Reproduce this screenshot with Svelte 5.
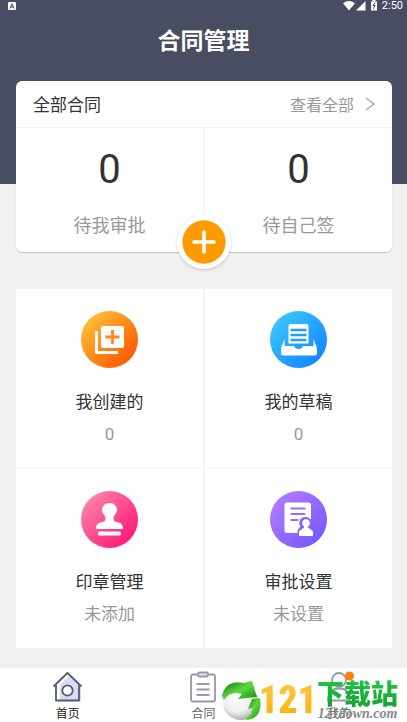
<script lang="ts">
  const stats = [
    { label: '待我审批', count: 0 },
    { label: '待自己签', count: 0 },
  ];

  const tiles = [
    { icon: 'created', title: '我创建的', note: '0', from: '#ffc038', to: '#ff5500' },
    { icon: 'draft', title: '我的草稿', note: '0', from: '#3cc8ff', to: '#0f84ff' },
    { icon: 'stamp', title: '印章管理', note: '未添加', from: '#ff85a8', to: '#ff1478' },
    { icon: 'approve', title: '审批设置', note: '未设置', from: '#b27cff', to: '#7358ff' },
  ];

  const tabs = [
    { icon: 'home', label: '首页' },
    { icon: 'contract', label: '合同' },
    { icon: 'mine', label: '我的' },
  ];

  let active = $state('home');
</script>

<div class="page">
  <header>
    <div class="status">
      <svg viewBox="0 0 8 8" width="8" height="8" aria-hidden="true">
        <rect width="8" height="8" rx="1" fill="#fff" />
        <path d="M2 6.5 4 1.8 6 6.5M2.8 5h2.4" fill="none" stroke="#484d61" />
      </svg>
      <span class="signals">
        <svg viewBox="0 0 36 12" width="36" height="12" aria-hidden="true">
          <path d="M0 3.2Q6-1.4 12 3.2L6 10.5Z" fill="#fff" />
          <path d="M22.500 1v9.500H13Z" fill="#fff" />
          <path d="M28 1.500h1.500V0h3v1.500H34v9h-6Z" fill="#fff" />
          <path d="M32 2.800 30 5.500h2L30.200 8.800" fill="none" stroke="#484d61" />
        </svg>
        2:50
      </span>
    </div>
    <h1>合同管理</h1>
  </header>

  <main>
    <section class="card">
      <div class="card-head">
        <h2>全部合同</h2>
        <a href="#all">
          查看全部
          <svg viewBox="0 0 12 16" width="12" height="16" aria-hidden="true">
            <path d="M2 2l8 6-8 6" fill="none" stroke="#aaa" stroke-width="1.500" />
          </svg>
        </a>
      </div>
      <div class="stats">
        {#each stats as stat}
          <a class="stat" href="#stat">
            <strong>{stat.count}</strong>
            <span>{stat.label}</span>
          </a>
        {/each}
      </div>
      <button class="add" type="button" aria-label="新建合同">
        <svg viewBox="0 0 44 44" width="44" height="44" aria-hidden="true">
          <circle cx="22" cy="22" r="21.700" fill="#ff9a00" />
          <path d="M22 12v20M12 22h20" stroke="#fff" stroke-width="3.600" stroke-linecap="round" />
        </svg>
      </button>
    </section>

    <section class="grid">
      {#each tiles as tile}
        <a class="tile" href="#{tile.icon}">
          <svg viewBox="0 0 57 57" width="57" height="57" aria-hidden="true">
            <defs>
              <linearGradient id="fill-{tile.icon}" x1="0.1" y1="0.1" x2="0.9" y2="0.9">
                <stop offset="0" stop-color={tile.from} />
                <stop offset="1" stop-color={tile.to} />
              </linearGradient>
            </defs>
            <circle cx="28.500" cy="28.500" r="28.500" fill="url(#fill-{tile.icon})" />
            {#if tile.icon === 'created'}
              <rect x="20" y="15" width="23" height="22" rx="2.500" fill="#fff" />
              <path d="M31.500 19v14M24.500 26h14" stroke="#ff8620" stroke-width="2.800" />
              <path d="M15.500 20v21.500H37" fill="none" stroke="#fff" stroke-width="2.800" stroke-linejoin="round" />
            {:else if tile.icon === 'draft'}
              <path d="M14.500 28 11 37v5.500q0 2 2 2h32q2 0 2-2V37l-3.500-9v7H33q-1 3-4.500 3T24 35h-9.500Z" fill="#fff" />
              <path d="M20.500 13h16q2 0 2 2v17.500h-20V15q0-2 2-2Z" fill="#fff" />
              <path d="M21.500 19h14M21.500 24h14M21.500 29h14" stroke="#259dff" stroke-width="2.400" stroke-linecap="round" />
            {:else if tile.icon === 'stamp'}
              <path d="M28.500 12c-4.500 0-7.500 3.300-7.500 7 0 3.800 3.500 5 3.500 8.500 0 3.200-2.500 3.500-5 4-3 .700-4.500 2.500-4.500 6.500h27c0-4-1.500-5.800-4.500-6.500-2.500-.500-5-.800-5-4 0-3.500 3.500-4.700 3.500-8.500 0-3.700-3-7-7.500-7Z" fill="#fff" />
              <rect x="17" y="40.500" width="23" height="4" rx="1.500" fill="#fff" />
            {:else}
              <path d="M17 11.500h21.500q2.500 0 2.500 2.500v14H30v14H17q-2.500 0-2.500-2.500V14q0-2.500 2.500-2.500Z" fill="#fff" />
              <path d="M21.500 17.500h13M21.500 23h13M21.500 29h6" stroke="#946dff" stroke-width="2.200" stroke-linecap="round" />
              <path d="M35.500 27.500a4.500 4.500 0 0 0-3 8L29 39.700V44.500h13.500v-4.800L38.500 35.500a4.500 4.500 0 0 0-3-8Z" fill="#8565ff" stroke="#8565ff" stroke-width="3" />
              <circle cx="36" cy="32" r="3.800" fill="#fff" />
              <path d="M34.500 34h3v2.500l5 4v4h-13v-4l5-4Z" fill="#fff" stroke="#fff" stroke-linejoin="round" />
            {/if}
          </svg>
          <strong>{tile.title}</strong>
          <span>{tile.note}</span>
        </a>
      {/each}
    </section>
  </main>

  <nav>
    {#each tabs as tab}
      <button type="button" class:on={active === tab.icon} onclick={() => (active = tab.icon)}>
        <svg viewBox="0 0 32 32" width="32" height="32" fill="none" stroke="#9599a8" stroke-width="1.800" aria-hidden="true">
          {#if tab.icon === 'home'}
            <path d="M8 14 18 4l11 11v15H8Z" fill="#d8dcf8" stroke="none" />
            <path d="M1.500 15.500 15.500 2l14 13.500M4 14v15.500h23V14" stroke="#555a6e" stroke-linejoin="round" />
            <circle cx="15.500" cy="19.500" r="5.200" fill="#fff" stroke="#555a6e" />
          {:else if tab.icon === 'contract'}
            <rect x="4" y="3.500" width="24" height="27" rx="2" />
            <rect x="11" y="1.500" width="10" height="4" rx="1.500" fill="#e2e4ec" />
            <path d="M9.500 13h13M9.500 18.500h13M9.500 24h13" />
          {:else}
            <circle cx="16" cy="9" r="7" />
            <path d="M5 29.500c0-8 4-12 11-12s11 4 11 12Z" />
            <circle cx="26.500" cy="5" r="4.500" fill="#ff7f00" stroke="none" />
          {/if}
        </svg>
        {tab.label}
      </button>
    {/each}

    <div class="watermark">
      <svg viewBox="0 0 42 42" width="42" height="42" aria-hidden="true">
        <defs>
          <radialGradient id="ball" cx="0.4" cy="0.35" r="0.7">
            <stop offset="0" stop-color="#fff" />
            <stop offset="0.6" stop-color="#eee" />
            <stop offset="1" stop-color="#a5a5a5" />
          </radialGradient>
          <linearGradient id="leaf" x1="0" y1="0" x2="1" y2="1">
            <stop offset="0" stop-color="#086a10" />
            <stop offset="0.5" stop-color="#5fd83c" />
            <stop offset="1" stop-color="#138a18" />
          </linearGradient>
        </defs>
        <ellipse cx="20" cy="24" rx="18" ry="17" fill="url(#ball)" />
        <path d="M1 17C3 6 12 1 23 4l8-2 5 16-19 2 4-5C14 13 8 14 3 21Z" fill="url(#leaf)" />
        <path d="M31 20l8-1c2 12-2 21-13 22l-2-2c5-2 8-6 7-10l-4 1Z" fill="url(#leaf)" />
      </svg>
      <span class="digits">121</span>
      <span class="site">
        <b>下载站</b>
        <i>121down.com</i>
      </span>
    </div>
  </nav>
</div>

<style>
  :global(body) {
    background: #f1f1f1;
  }
  .page {
    display: flex;
    flex-direction: column;
    min-height: 100vh;
    font-family: "Noto Sans CJK SC", sans-serif;
    color: #333;
  }
  header {
    padding-bottom: 118px;
    background: #484d61;
    color: #fff;
  }
  .status {
    display: flex;
    justify-content: space-between;
    align-items: center;
    height: 12px;
    padding: 0 4px 0 8px;
    font: 11px/12px Roboto, sans-serif;
  }
  .signals {
    display: flex;
    gap: 3px;
  }
  h1 {
    margin: 0;
    font-size: 23px;
    font-weight: 700;
    line-height: 54px;
    text-align: center;
  }
  a {
    color: inherit;
    text-decoration: none;
  }
  main {
    flex: 1;
    margin-top: -103px;
    padding: 0 15px 20px 16px;
  }
  .card {
    position: relative;
    margin-bottom: 37px;
    border-radius: 6px;
    background: #fff;
    box-shadow: 0 1px 1px #0003;
  }
  .card-head {
    display: flex;
    justify-content: space-between;
    align-items: center;
    height: 46px;
    padding: 0 16px 0 17px;
    border-bottom: 1px solid #f0f0f0;
  }
  h2 {
    margin: 0;
    font-size: 17px;
    font-weight: 400;
    line-height: 24px;
  }
  .card-head a {
    display: flex;
    align-items: center;
    gap: 10px;
    font-size: 16px;
    line-height: 24px;
    color: #999;
  }
  .stats,
  .grid {
    display: grid;
    grid-template-columns: 1fr 1fr;
    column-gap: 2px;
  }
  .stat,
  .tile {
    display: flex;
    flex-direction: column;
    align-items: center;
  }
  .stat {
    gap: 18px;
    padding: 18px 0 16px;
  }
  .stat + .stat {
    box-shadow: -2px 0 #f6f6f6;
  }
  .stat strong {
    font-family: Roboto, sans-serif;
    font-size: 40px;
    font-weight: 400;
    line-height: 48px;
  }
  .stat span {
    font-size: 18px;
    line-height: 24px;
    color: #999;
  }
  .add {
    position: absolute;
    bottom: -17px;
    left: 50%;
    width: 54px;
    height: 54px;
    padding: 5px;
    border: 0;
    border-radius: 50%;
    background: #fff;
    box-shadow: 0 1px 3px #0003;
    transform: translateX(-50%);
    cursor: pointer;
  }
  .add svg {
    display: block;
  }
  .grid {
    row-gap: 1px;
    background: #f5f5f5;
  }
  .tile {
    padding: 22px 0;
    background: #fff;
  }
  .tile strong {
    margin: 21px 0 9px;
    font-size: 17px;
    font-weight: 400;
    line-height: 24px;
  }
  .tile span {
    font-family: Roboto, "Noto Sans CJK SC", sans-serif;
    font-size: 17px;
    line-height: 24px;
    color: #999;
  }
  nav {
    position: relative;
    display: grid;
    grid-template-columns: repeat(3, 1fr);
    background: #fff;
  }
  nav button {
    display: flex;
    flex-direction: column;
    align-items: center;
    gap: 2px;
    padding: 3px 0 1px;
    border: 0;
    background: none;
    font: 12px/16px "Noto Sans CJK SC", sans-serif;
    color: #666;
    cursor: pointer;
  }
  nav button.on {
    color: #222;
  }
  .watermark {
    position: absolute;
    right: 9px;
    bottom: 0;
    display: flex;
    align-items: center;
    pointer-events: none;
  }
  .watermark svg {
    margin-right: -4px;
  }
  .digits {
    font: 900 38px/44px "Liberation Sans Narrow", "Roboto Condensed", Roboto, sans-serif;
    color: transparent;
    background: linear-gradient(#ffc84a, #ffb000);
    background-clip: text;
  }
  .site {
    display: flex;
    flex-direction: column;
    align-items: center;
  }
  .site b {
    font-size: 27px;
    font-weight: 900;
    line-height: 28px;
    color: transparent;
    background: linear-gradient(#23c447, #12a52f);
    background-clip: text;
  }
  .site i {
    font: italic 700 14px/14px "Liberation Serif", serif;
    color: #888;
  }
</style>
